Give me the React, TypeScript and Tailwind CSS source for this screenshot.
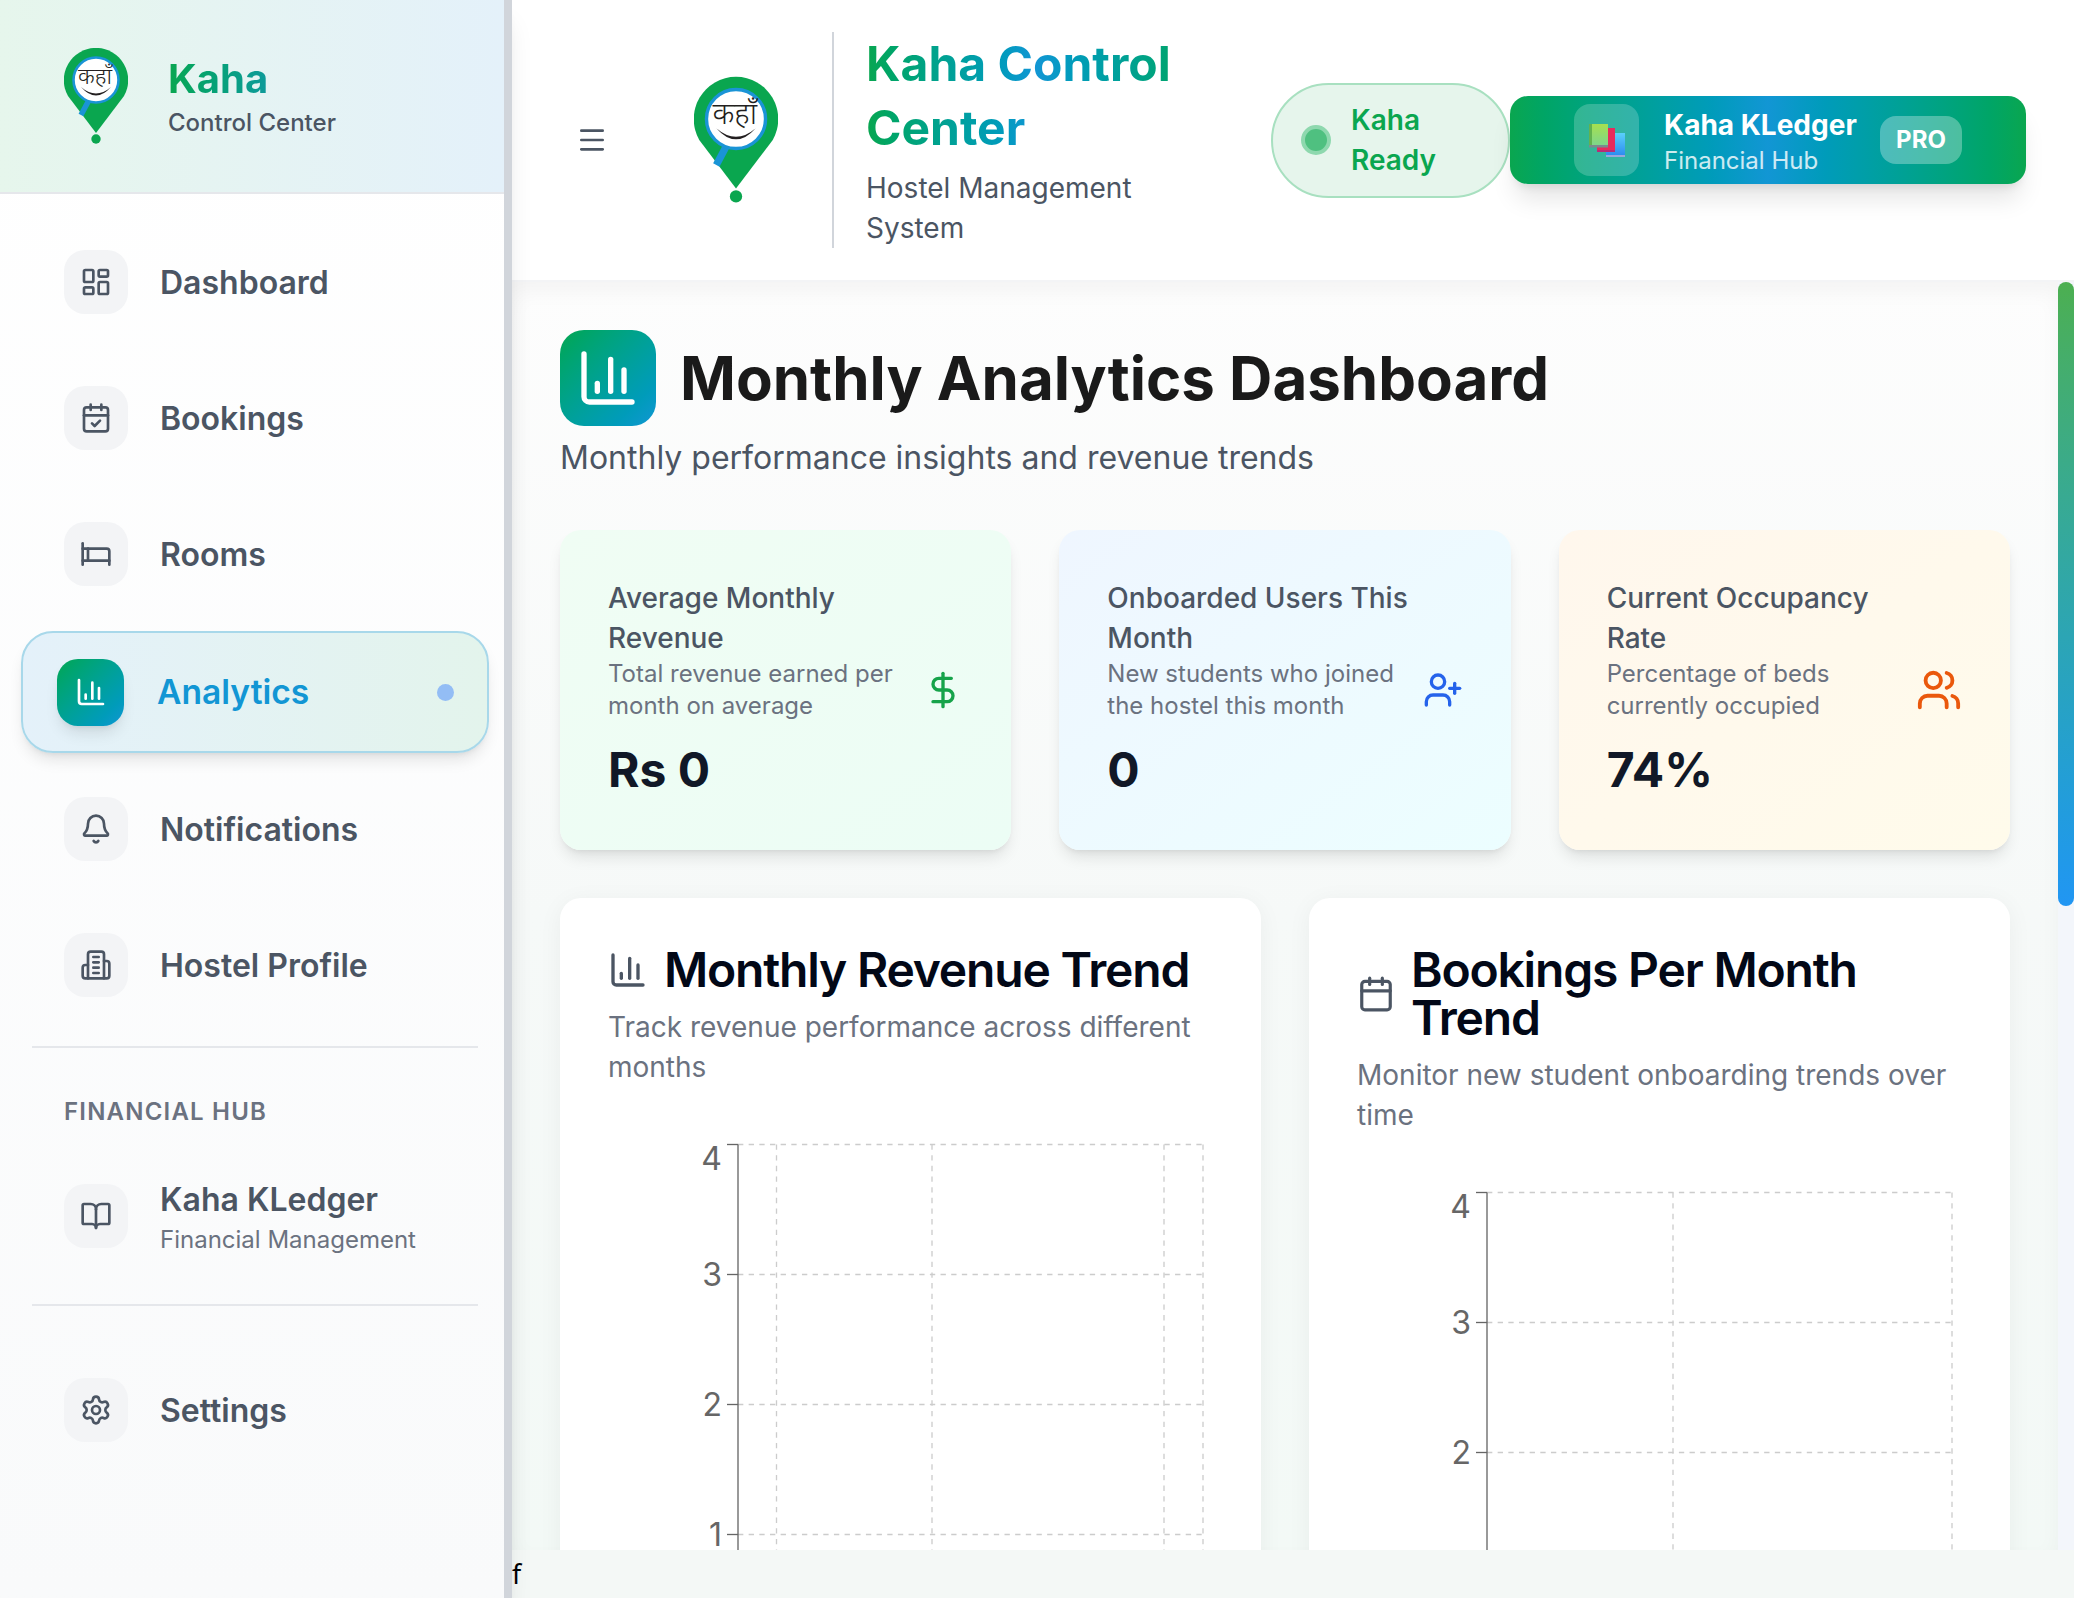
import {
  Bell,
  Bed,
  BookOpen,
  Calendar,
  CalendarCheck,
  ChartColumn,
  DollarSign,
  LayoutDashboard,
  Menu,
  Settings,
  UserPlus,
  Users,
} from "lucide-react";
import type { ReactNode } from "react";

function KahaLogo({ className }: { className: string }) {
  return (
    <svg viewBox="0 0 64 96" className={className}>
      <path d="M32 85 L4 48 A32.2 32.2 0 1 1 60 48 Z" fill="#0aa64f" />
      <circle cx="32" cy="91" r="4.7" fill="#0aa64f" />
      <path d="M24.5 53 L17 67" stroke="#1a94d6" strokeWidth="5.5" />
      <circle cx="32" cy="32" r="22.5" fill="#fff" stroke="#1a94d6" strokeWidth="2.6" />
      <text x="31" y="36" textAnchor="middle" fontSize="23" fontWeight="300" fill="#231f20" fontFamily="'Noto Sans', 'Noto Sans CJK SC', sans-serif">
        कहाँ
      </text>
      <path d="M17 39 Q32 56 47 39 Q32 52 17 39 Z" fill="#231f20" />
    </svg>
  );
}

function BooksIcon() {
  return (
    <svg viewBox="0 0 36 33" className="h-[33px] w-[36px]">
      <defs>
        <linearGradient id="bookBlue" x1="0" y1="0" x2="0" y2="1">
          <stop offset="0" stopColor="#5ad0fb" />
          <stop offset="1" stopColor="#2e8df0" />
        </linearGradient>
        <linearGradient id="bookGreen" x1="0" y1="0" x2="0" y2="1">
          <stop offset="0" stopColor="#a6e04f" />
          <stop offset="1" stopColor="#7ed68a" />
        </linearGradient>
      </defs>
      <rect x="17" y="9" width="19" height="22" fill="url(#bookBlue)" />
      <rect x="17" y="31" width="19" height="2" fill="#9aa6dc" />
      <rect x="8" y="4" width="18" height="22" fill="#e72a5d" />
      <rect x="8" y="26" width="18" height="2" fill="#b92b78" />
      <rect x="0" y="0" width="19" height="21" fill="url(#bookGreen)" />
      <rect x="0" y="0" width="3" height="21" fill="#62b34f" />
      <rect x="0" y="21" width="19" height="2.5" fill="#7b8a8e" />
    </svg>
  );
}

function OldBuilding() {
  return (
    <svg viewBox="0 0 24 24" fill="none" stroke="currentColor" strokeWidth="2" strokeLinecap="round" strokeLinejoin="round" className="h-8 w-8">
      <path d="M6 22V4a2 2 0 0 1 2-2h8a2 2 0 0 1 2 2v18Z" />
      <path d="M6 12H4a2 2 0 0 0-2 2v6a2 2 0 0 0 2 2h2" />
      <path d="M18 9h2a2 2 0 0 1 2 2v9a2 2 0 0 1-2 2h-2" />
      <path d="M10 6h4" />
      <path d="M10 10h4" />
      <path d="M10 14h4" />
      <path d="M10 18h4" />
    </svg>
  );
}

function NavItem({ icon, label, sub }: { icon: ReactNode; label: string; sub?: string }) {
  return (
    <div className="flex h-[120px] items-center gap-8 pl-[64px]">
      <div className="flex h-16 w-16 shrink-0 items-center justify-center rounded-[21px] bg-[#f3f4f6] text-[#4b5563]">
        {icon}
      </div>
      <div className={sub ? "pt-1" : "pt-[1px]"}>
        <div className="text-[32px] font-semibold leading-[40px] text-[#4b5563]">{label}</div>
        {sub && <div className="mt-1 text-[24px] leading-[32px] text-[#6b7280]">{sub}</div>}
      </div>
    </div>
  );
}

function Sidebar() {
  return (
    <aside className="relative z-10 flex h-full w-[512px] shrink-0 flex-col border-r-[8px] border-[#d1d5db] bg-gradient-to-b from-white to-[#f9fafb] shadow-xl">
      <div className="flex h-[194px] items-center gap-10 border-b-2 border-[#e5e7eb] bg-gradient-to-r from-[#e6f6ec] to-[#e4f1fa] pl-[64px]">
        <KahaLogo className="h-24 w-16" />
        <div className="pt-[6px]">
          <div className="w-fit bg-gradient-to-r from-[#0aa64f] to-[#0f9a9a] bg-clip-text text-[40px] font-bold leading-[48px] text-transparent">
            Kaha
          </div>
          <div className="text-[24px] font-medium leading-[40px] text-[#4b5563]">Control Center</div>
        </div>
      </div>

      <nav className="flex flex-col gap-4 pt-[28px]">
        <NavItem icon={<LayoutDashboard size={32} />} label="Dashboard" />
        <NavItem icon={<CalendarCheck size={32} />} label="Bookings" />
        <NavItem icon={<Bed size={32} />} label="Rooms" />

        {/* Active item */}
        <div className="mx-[21px] mt-[1px] flex h-[122px] w-[468px] items-center gap-[33px] rounded-[32px] border-[2.67px] border-[#a8d8ea] bg-gradient-to-r from-[#e4f1fa] to-[#e3f4ec] pl-[34px] pr-[33px] shadow-lg">
          <div className="flex h-[67px] w-[67px] shrink-0 items-center justify-center rounded-[21px] bg-gradient-to-br from-[#0aa64f] to-[#1296d4] text-white shadow-lg">
            <ChartColumn size={32} />
          </div>
          <div className="flex-1 pt-[1px] text-[33.6px] font-semibold text-[#1296d4]">Analytics</div>
          <div className="h-[17px] w-[17px] rounded-full bg-[#93bdf5]" />
        </div>

        <NavItem icon={<Bell size={32} />} label="Notifications" />
        <NavItem icon={<OldBuilding />} label="Hostel Profile" />
      </nav>

      <div className="ml-8 mt-[21px] h-[2px] w-[446px] bg-[#e5e7eb]" />
      <div className="mt-[48px] pl-[64px] text-[24px] font-semibold leading-[32px] tracking-wider text-[#6b7280]">
        FINANCIAL HUB
      </div>
      <div className="mt-[28px]">
        <NavItem icon={<BookOpen size={32} />} label="Kaha KLedger" sub="Financial Management" />
      </div>
      <div className="ml-8 mt-[28px] h-[2px] w-[446px] bg-[#e5e7eb]" />
      <div className="mt-[44px]">
        <NavItem icon={<Settings size={32} />} label="Settings" />
      </div>
    </aside>
  );
}

function Header() {
  return (
    <header className="flex h-[282px] shrink-0 items-center justify-between border-b-2 border-[#f3f4f6] bg-white pl-[64px] pr-[48px]">
      <div className="flex items-center">
        <Menu size={32} className="text-[#4b5563]" />
        <KahaLogo className="ml-[86px] h-[128px] w-[84px]" />
        <div className="ml-[54px] h-[216px] w-[2px] bg-[#d1d5db]" />
        <div className="ml-[32px] w-[340px]">
          <div className="bg-gradient-to-r from-[#0aa64f] via-[#1296d4] to-[#0aa64f] bg-clip-text text-[48px] font-bold leading-[64px] text-transparent">
            Kaha Control Center
          </div>
          <div className="mt-[8px] text-[28px] leading-[40px] text-[#4b5563]">Hostel Management System</div>
        </div>
      </div>

      <div className="flex items-center">
        <div className="flex h-[115px] w-[239px] items-center gap-[20px] rounded-full border-[2.67px] border-[#a8e0c0] bg-[#e6f5ec] pl-[28px]">
          <div className="h-[30px] w-[30px] rounded-full border-[4px] border-[#8ed8ae] bg-[#4fc080]" />
          <div className="w-[100px] text-[28px] font-semibold leading-[40px] text-[#0aa64f]">Kaha Ready</div>
        </div>

        <div className="flex h-[88px] w-[516px] items-center rounded-[18px] bg-gradient-to-r from-[#0aa64f] via-[#1296d4] to-[#0aa64f] pl-[64px] shadow-xl">
          <div className="flex h-[72px] w-[65px] items-center justify-center rounded-[16px] bg-white/20">
            <BooksIcon />
          </div>
          <div className="ml-[25px] w-[216px] pt-1">
            <div className="text-[28px] font-bold leading-[36px] text-white">Kaha KLedger</div>
            <div className="mt-[2px] text-[24px] leading-[32px] text-white/80">Financial Hub</div>
          </div>
          <div className="flex h-12 w-[82px] items-center justify-center rounded-[16px] bg-white/30 text-[24px] font-bold text-white">
            PRO
          </div>
        </div>
      </div>
    </header>
  );
}

function StatCard({
  bg,
  title,
  desc,
  value,
  icon,
}: {
  bg: string;
  title: string;
  desc: string;
  value: string;
  icon: ReactNode;
}) {
  return (
    <div className={`h-[320px] rounded-[21px] p-12 shadow-lg ${bg}`}>
      <div className="max-w-[312px] text-[28px] font-medium leading-[40px] text-[#4b5563]">{title}</div>
      <div className="flex items-center justify-between">
        <div className="w-[300px] text-[24px] leading-[32px] text-[#6b7280]">{desc}</div>
        {icon}
      </div>
      <div className="mt-4 text-[48px] font-bold leading-[64px] text-[#111827]">{value}</div>
    </div>
  );
}

function GridChart({ vertical, ticks }: { vertical: number[]; ticks: number[] }) {
  const top = 9.5;
  const step = 130;
  return (
    <svg width="605" height="500" className="mt-12 block">
      <g stroke="#cccccc" strokeWidth="1.33" strokeDasharray="5.33 5.33" fill="none">
        {[0, 1, 2, 3].map((i) => (
          <line key={i} x1="130" x2="595" y1={top + i * step} y2={top + i * step} />
        ))}
        {vertical.map((x) => (
          <line key={x} x1={x} x2={x} y1={top} y2="500" />
        ))}
      </g>
      <line x1="130" x2="130" y1={top} y2="500" stroke="#666666" strokeWidth="1.33" />
      {ticks.map((v, i) => (
        <g key={v}>
          <line x1="119" x2="130" y1={top + i * step} y2={top + i * step} stroke="#666666" strokeWidth="1.33" />
          <text
            x="114"
            y={i === 0 ? top + 14 : top + i * step}
            textAnchor="end"
            dominantBaseline="central"
            fontSize="32"
            fill="#666666"
          >
            {v}
          </text>
        </g>
      ))}
    </svg>
  );
}

function ChartCard({
  icon,
  title,
  desc,
  vertical,
}: {
  icon: ReactNode;
  title: string;
  desc: string;
  vertical: number[];
}) {
  return (
    <div className="h-[760px] rounded-[21px] bg-white p-12 shadow-[0_4px_24px_rgba(0,0,0,0.05)]">
      <div className="flex items-center gap-4">
        <span className="shrink-0 text-[#4b5563]">{icon}</span>
        <h2 className="text-[48px] font-semibold leading-[48px] tracking-tight text-[#020817]">{title}</h2>
      </div>
      <p className="mt-[13px] mb-[1px] text-[28px] leading-[40px] text-[#6b7280]">{desc}</p>
      <GridChart vertical={vertical} ticks={[4, 3, 2, 1]} />
    </div>
  );
}

export default function App() {
  return (
    <div className="flex h-[1598px] w-[2074px] overflow-hidden font-['Inter',sans-serif]">
      <Sidebar />
      <div className="flex min-w-0 flex-1 flex-col">
        <Header />
        <div className="flex min-h-0 flex-1">
          <main className="min-w-0 flex-1 overflow-hidden bg-gradient-to-b from-[#fdfdfd] via-[#f6f9f8] to-[#f3f9f6] px-12 pt-12 shadow-[inset_0_10px_20px_rgba(0,0,0,0.04)]">
            <div className="flex items-center gap-6">
              <div className="flex h-24 w-24 items-center justify-center rounded-[24px] bg-gradient-to-br from-[#0aa64f] to-[#1296d4] text-white">
                <ChartColumn size={64} />
              </div>
              <h1 className="text-[60px] font-bold leading-[96px] text-[#1a1a1a]">Monthly Analytics Dashboard</h1>
            </div>
            <p className="mt-3 text-[32px] leading-[40px] text-[#4b5563]">Monthly performance insights and revenue trends</p>

            <div className="mt-[52px] grid grid-cols-3 gap-12">
              <StatCard
                bg="bg-gradient-to-br from-[#f0fdf4] to-[#ecfdf5]"
                title="Average Monthly Revenue"
                desc="Total revenue earned per month on average"
                value="Rs 0"
                icon={<DollarSign size={40} className="shrink-0 text-[#16a34a]" />}
              />
              <StatCard
                bg="bg-gradient-to-br from-[#eff6ff] to-[#ecfeff]"
                title="Onboarded Users This Month"
                desc="New students who joined the hostel this month"
                value="0"
                icon={<UserPlus size={40} className="shrink-0 text-[#2563eb]" />}
              />
              <StatCard
                bg="bg-gradient-to-br from-[#fff7ed] to-[#fffbeb]"
                title="Current Occupancy Rate"
                desc="Percentage of beds currently occupied"
                value="74%"
                icon={<Users size={46} className="shrink-0 text-[#ea580c]" />}
              />
            </div>

            <div className="mt-12 grid grid-cols-2 gap-12">
              <ChartCard
                icon={<ChartColumn size={40} />}
                title="Monthly Revenue Trend"
                desc="Track revenue performance across different months"
                vertical={[168.5, 324, 556, 595]}
              />
              <ChartCard
                icon={<Calendar size={38} />}
                title="Bookings Per Month Trend"
                desc="Monitor new student onboarding trends over time"
                vertical={[316, 595]}
              />
            </div>
          </main>

          {/* Scrollbar */}
          <div className="w-4 shrink-0 bg-[#f3f6fb]">
            <div className="h-[624px] rounded-full bg-gradient-to-b from-[#4caf50] to-[#2196f3]" />
          </div>
        </div>
        <div className="flex h-12 shrink-0 items-center bg-[#f4f8f6] font-['Noto_Sans',sans-serif] text-[26.67px] text-black">
          f
        </div>
      </div>
    </div>
  );
}
